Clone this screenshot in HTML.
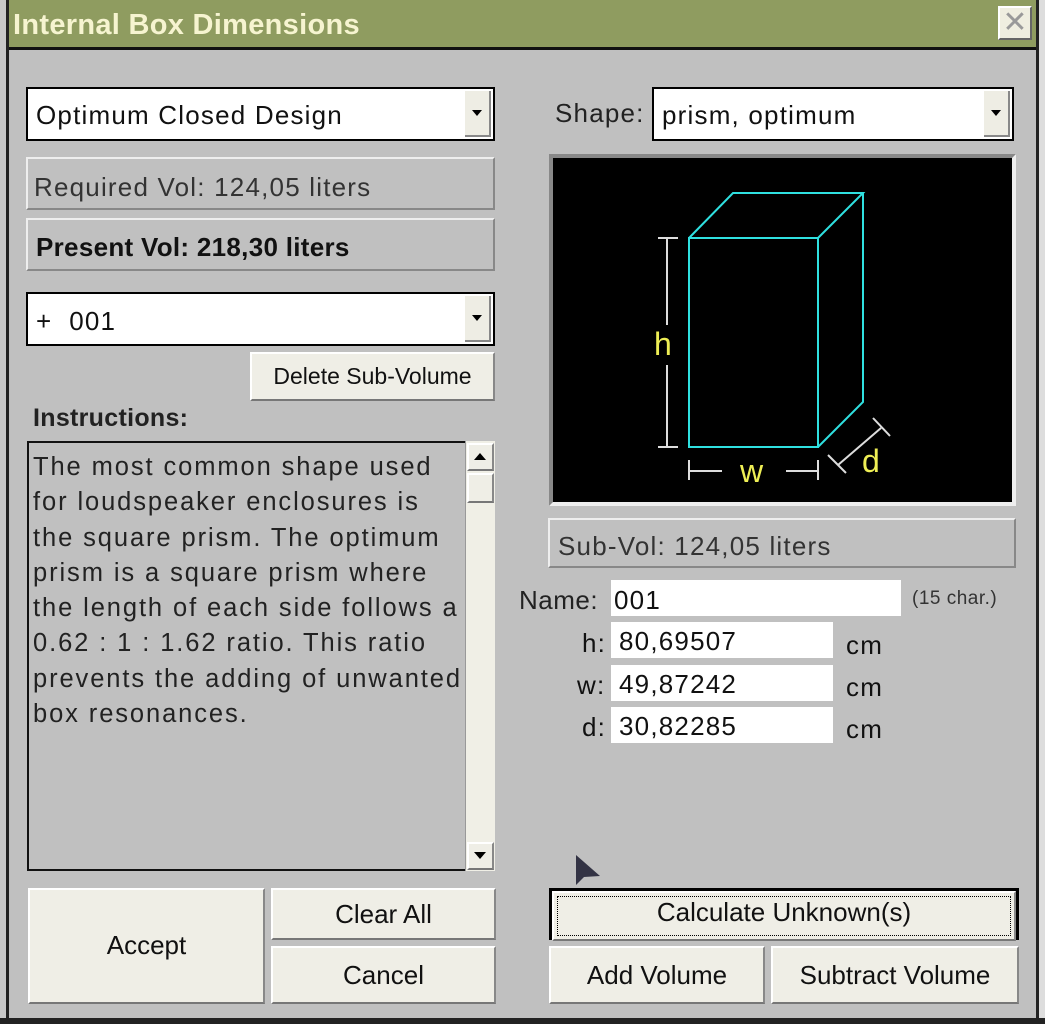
<!DOCTYPE html>
<html><head><style>
body{margin:0;width:1045px;height:1024px;background:#c0c0c0;overflow:hidden;font-family:"Liberation Sans",sans-serif;position:relative}
.a{position:absolute;box-sizing:border-box}
.t{font-size:26px;color:#111;white-space:nowrap;letter-spacing:1.2px}
.combo{background:#fff;border:2px solid #000;}
.dd{position:absolute;right:2px;top:2px;bottom:2px;width:24px;background:#eeede4;border-right:2px solid #888;border-bottom:2px solid #888}
.dd:after{content:"";position:absolute;left:7px;top:19px;border-left:5px solid transparent;border-right:5px solid transparent;border-top:6px solid #000}
.lbl{background:#c0c0c0;border:2px solid;border-color:#eee #888 #888 #eee}
.btn{background:#efeee6;border:2px solid;border-color:#fff #888 #777 #fff;text-align:center;font-size:26px;color:#111}
.in{background:#fff}
</style></head><body>
<div class="a" style="left:0;top:0;width:1045px;height:50px;background:#8f9c60;border-bottom:3px solid #111"></div>
<div class="a" style="left:0;top:0;width:9px;height:1024px;background:#c8c8c8;border-right:3px solid #222"></div>
<div class="a" style="left:1036px;top:0;width:9px;height:1024px;background:#ddd;border-left:3px solid #222"></div>
<div class="a" style="left:0;top:1018px;width:1045px;height:6px;background:#222"></div>
<div class="a t" style="left:13px;top:9px;font-size:29px;font-weight:bold;color:#f6f4d0;letter-spacing:0.3px">Internal Box Dimensions</div>
<div class="a" style="left:998px;top:6px;width:34px;height:34px;background:#efeee0;border:2px solid;border-color:#fff #666 #666 #fff;color:#999;font-size:30px;text-align:center;line-height:30px">✕</div>

<div class="a combo" style="left:26px;top:87px;width:469px;height:54px"><div class="a t" style="left:8px;top:11px">Optimum Closed Design</div><div class="dd"></div></div>
<div class="a lbl" style="left:26px;top:157px;width:469px;height:53px"><div class="a t" style="left:6px;top:13px;color:#333">Required Vol: 124,05 liters</div></div>
<div class="a lbl" style="left:26px;top:218px;width:469px;height:53px"><div class="a t" style="left:8px;top:12px;font-weight:bold;letter-spacing:0.3px">Present Vol: 218,30 liters</div></div>
<div class="a combo" style="left:26px;top:292px;width:469px;height:54px"><div class="a t" style="left:8px;top:12px">+ &nbsp;001</div><div class="dd"></div></div>
<div class="a btn" style="left:250px;top:352px;width:245px;height:49px;font-size:23px;line-height:44px">Delete Sub-Volume</div>
<div class="a t" style="left:33px;top:404px;font-weight:bold;font-size:25px;color:#222;letter-spacing:0.3px">Instructions:</div>
<div class="a" style="left:27px;top:441px;width:440px;height:430px;border:2px solid #111;border-right:none"></div>
<div class="a t" style="left:33px;top:450px;font-size:25.5px;line-height:35.3px;color:#222;letter-spacing:1.9px">The most common shape used<br>for loudspeaker enclosures is<br>the square prism. The optimum<br>prism is a square prism where<br>the length of each side follows a<br>0.62 : 1 : 1.62 ratio. This ratio<br>prevents the adding of unwanted<br>box resonances.</div>
<div class="a" style="left:465px;top:441px;width:30px;height:430px;background:#f0efe6;border-left:1px solid #999"></div>
<div class="a btn" style="left:467px;top:443px;width:27px;height:28px"></div>
<div class="a" style="left:474px;top:453px;border-left:6px solid transparent;border-right:6px solid transparent;border-bottom:7px solid #000"></div>
<div class="a btn" style="left:467px;top:473px;width:27px;height:30px"></div>
<div class="a btn" style="left:467px;top:842px;width:27px;height:28px"></div>
<div class="a" style="left:474px;top:852px;border-left:6px solid transparent;border-right:6px solid transparent;border-top:7px solid #000"></div>

<div class="a btn" style="left:28px;top:888px;width:237px;height:116px;line-height:110px">Accept</div>
<div class="a btn" style="left:271px;top:888px;width:225px;height:52px;line-height:48px">Clear All</div>
<div class="a btn" style="left:271px;top:946px;width:225px;height:58px;line-height:54px">Cancel</div>

<div class="a t" style="left:555px;top:98px;color:#222">Shape:</div>
<div class="a combo" style="left:652px;top:87px;width:362px;height:54px"><div class="a t" style="left:8px;top:11px">prism, optimum</div><div class="dd"></div></div>
<div class="a" style="left:549px;top:154px;width:467px;height:352px;background:#000;border:4px solid;border-color:#888 #eee #eee #888"></div>
<svg class="a" style="left:0;top:0" width="1045" height="1024">
<g stroke="#2fe0e0" stroke-width="2" fill="none">
<rect x="689" y="238" width="129" height="209"/>
<path d="M689 238L733 193H863L818 238M863 193V402L818 447"/>
</g>
<g stroke="#ddd" stroke-width="2" fill="none">
<path d="M658 238H678M658 447H678M667 238V325M667 365V447M689 460V480M818 460V480M689 471H722M786 471H818M828 455L846 473M873 418L890 436M838 465L881 428"/>
</g>
<g fill="#ee5">
<text x="654" y="355" font-family="Liberation Sans" font-size="32">h</text>
<text x="740" y="482" font-family="Liberation Sans" font-size="32">w</text>
<text x="862" y="472" font-family="Liberation Sans" font-size="32">d</text>
</g>
<path d="M576 855L576 885L584 877L600 876Z" fill="#334"/>
</svg>
<div class="a lbl" style="left:548px;top:518px;width:468px;height:50px"><div class="a t" style="left:8px;top:11px;color:#333">Sub-Vol: 124,05 liters</div></div>
<div class="a t" style="left:519px;top:585px;color:#222;letter-spacing:0.5px">Name:</div>
<div class="a in" style="left:611px;top:580px;width:290px;height:36px"><div class="a t" style="left:3px;top:5px">001</div></div>
<div class="a t" style="left:912px;top:588px;font-size:19px;color:#333;letter-spacing:0.5px">(15 char.)</div>
<div class="a t" style="left:582px;top:628px">h:</div>
<div class="a in" style="left:611px;top:622px;width:222px;height:36px"><div class="a t" style="left:8px;top:4px">80,69507</div></div>
<div class="a t" style="left:846px;top:630px">cm</div>
<div class="a t" style="left:577px;top:670px">w:</div>
<div class="a in" style="left:611px;top:665px;width:222px;height:36px"><div class="a t" style="left:8px;top:4px">49,87242</div></div>
<div class="a t" style="left:846px;top:672px">cm</div>
<div class="a t" style="left:582px;top:712px">d:</div>
<div class="a in" style="left:611px;top:707px;width:222px;height:36px"><div class="a t" style="left:8px;top:4px">30,82285</div></div>
<div class="a t" style="left:846px;top:714px">cm</div>

<div class="a" style="left:549px;top:888px;width:470px;height:52px;background:#000;padding:3px"><div class="btn" style="height:46px;line-height:38px;border-width:2px;outline:1px dotted #000;outline-offset:-6px">Calculate Unknown(s)</div></div>
<div class="a btn" style="left:549px;top:946px;width:216px;height:58px;line-height:54px">Add Volume</div>
<div class="a btn" style="left:771px;top:946px;width:248px;height:58px;line-height:54px">Subtract Volume</div>
</body></html>
